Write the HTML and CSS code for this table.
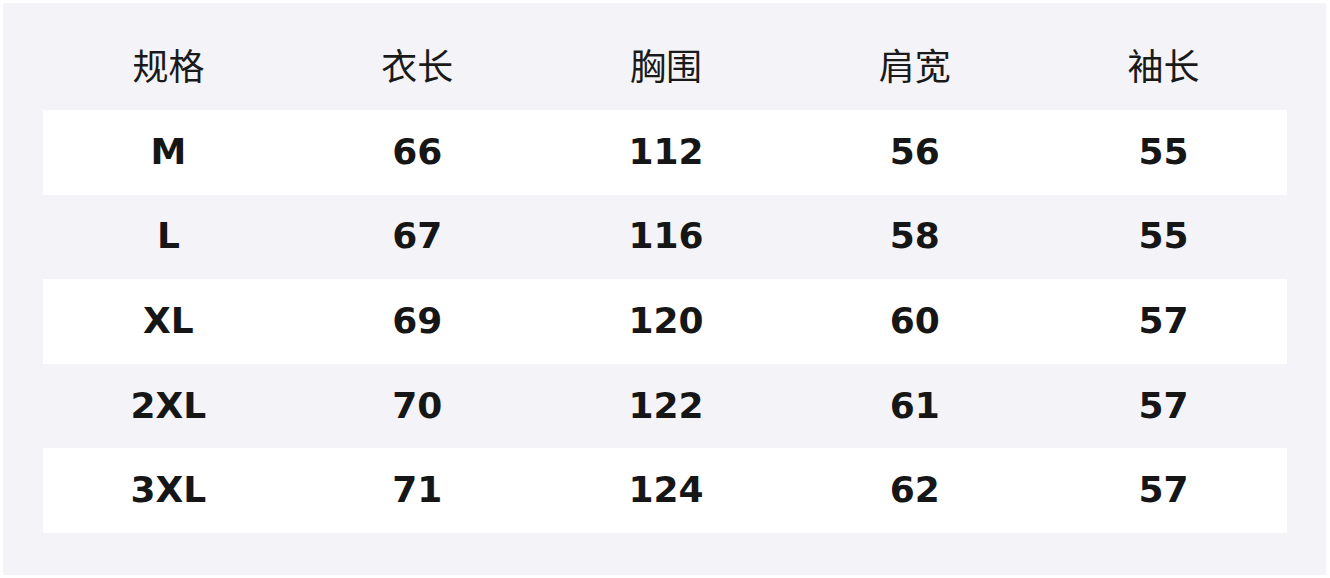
FILE: index.html
```html
<!DOCTYPE html>
<html lang="zh">
<head>
<meta charset="utf-8">
<link rel="stylesheet" href="styles.css">
</head>
<body>
<div class="panel">
  <div class="table">
    <div class="row head"><div>规格</div><div>衣长</div><div>胸围</div><div>肩宽</div><div>袖长</div></div>
    <div class="row white"><div>M</div><div>66</div><div>112</div><div>56</div><div>55</div></div>
    <div class="row"><div>L</div><div>67</div><div>116</div><div>58</div><div>55</div></div>
    <div class="row white"><div>XL</div><div>69</div><div>120</div><div>60</div><div>57</div></div>
    <div class="row"><div>2XL</div><div>70</div><div>122</div><div>61</div><div>57</div></div>
    <div class="row white"><div>3XL</div><div>71</div><div>124</div><div>62</div><div>57</div></div>
  </div>
</div>
</body>
</html>
```
FILE: styles.css
```css
html, body { margin: 0; padding: 0; background: #ffffff; }
.panel {
  margin: 3px 0 0 3px;
  width: 1323px;
  height: 572px;
  box-sizing: border-box;
  background: #f4f4f8;
  padding: 21px 39px 0 40px;
}
.table { display: flex; flex-direction: column; }
.row {
  display: grid;
  grid-template-columns: repeat(5, 1fr);
  height: 84.6px;
  box-sizing: border-box;
  padding-bottom: 2px;
  align-items: center;
  text-align: center;
  font-family: "DejaVu Sans", "Noto Sans CJK SC", sans-serif;
  font-weight: bold;
  font-size: 36px;
  color: #161616;
}
.row > div { padding-left: 2px; }
.row.white { background: #ffffff; }
.row.head {
  height: 86px;
  padding-bottom: 6px;
  font-family: "Noto Sans CJK SC", sans-serif;
  font-weight: normal;
  font-size: 36px;
  color: #1a1a1a;
}
```
